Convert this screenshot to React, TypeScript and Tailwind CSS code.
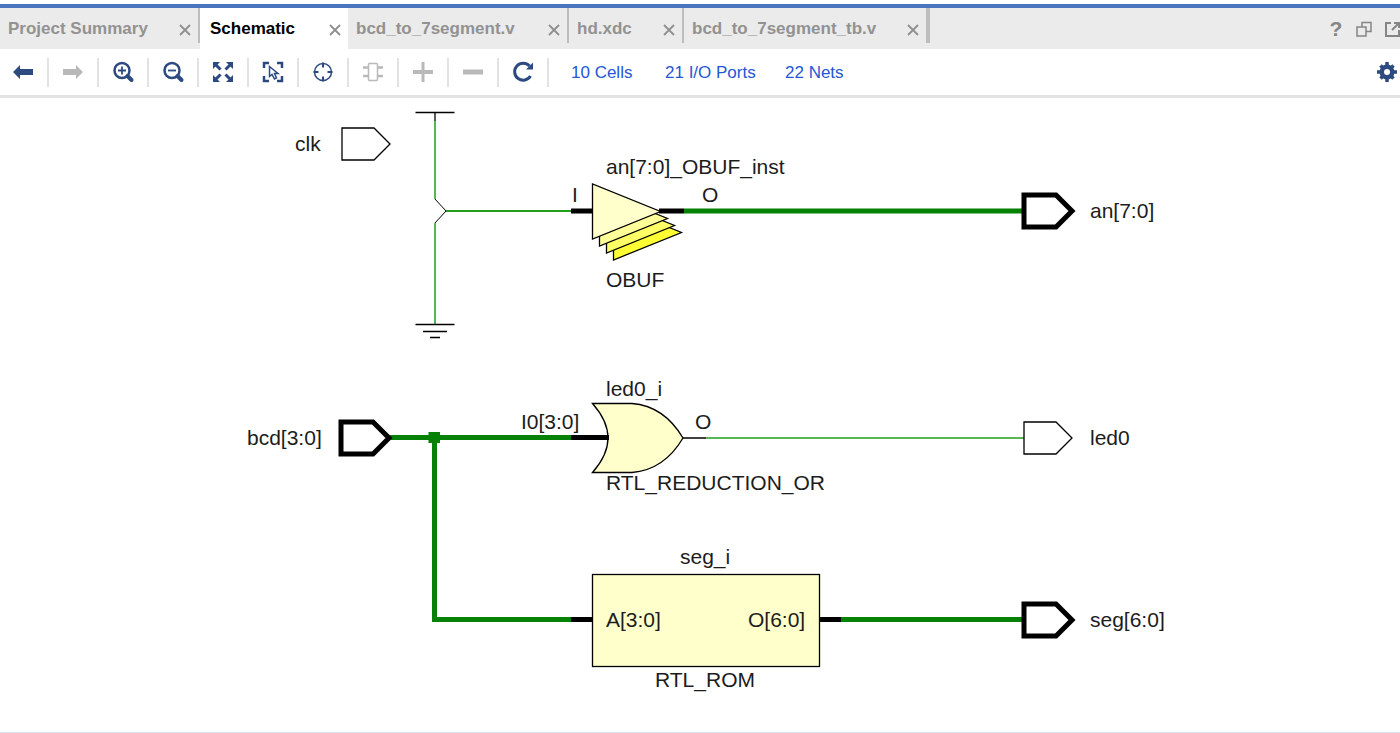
import type { ReactNode } from "react";

type Tab = {
  name: string;
  width: string;
  divider: string;
  active?: boolean;
};

type ToolItem = {
  label: string;
  icon: ReactNode;
  disabled?: boolean;
};

const tabs: Tab[] = [
  { name: "Project Summary", width: "w-[200px]", divider: "w-0.5" },
  { name: "Schematic", width: "w-[148px]", divider: "w-0", active: true },
  { name: "bcd_to_7segment.v", width: "w-[221px]", divider: "w-0.5" },
  { name: "hd.xdc", width: "w-[115px]", divider: "w-0.5" },
  { name: "bcd_to_7segment_tb.v", width: "w-[246px]", divider: "w-1" },
];

// Toolbar icons, all drawn on a 24x24 grid
const tools: ToolItem[] = [
  {
    label: "Previous",
    icon: <path d="M2 12 9 5V9H22V15H9V19Z" fill="currentColor" />,
  },
  {
    label: "Next",
    disabled: true,
    icon: <path d="M22 12 15 5V9H2V15H15V19Z" fill="currentColor" />,
  },
  {
    label: "Zoom in",
    icon: (
      <g fill="none" stroke="currentColor">
        <circle cx="11" cy="10.500" r="7.500" strokeWidth="2.500" />
        <path d="M7 10.500H15M11 6.500V14.500" strokeWidth="1.800" />
        <path d="M16.500 16 20.500 20" strokeWidth="4" strokeLinecap="round" />
      </g>
    ),
  },
  {
    label: "Zoom out",
    icon: (
      <g fill="none" stroke="currentColor">
        <circle cx="11" cy="10.500" r="7.500" strokeWidth="2.500" />
        <path d="M7 10.500H15" strokeWidth="1.800" />
        <path d="M16.500 16 20.500 20" strokeWidth="4" strokeLinecap="round" />
      </g>
    ),
  },
  {
    label: "Zoom fit",
    icon: (
      <g>
        <path
          d="M2 2H9L2 9ZM22 2V9L15 2ZM2 22V15L9 22ZM22 22H15L22 15Z"
          fill="currentColor"
        />
        <path
          d="M4 4 9.500 9.500M20 4 14.500 9.500M4 20 9.500 14.500M20 20 14.500 14.500"
          stroke="currentColor"
          strokeWidth="3"
        />
      </g>
    ),
  },
  {
    label: "Select area",
    icon: (
      <g fill="none" stroke="currentColor">
        <path d="M3 8V3H8M16 3H21V8M21 16V21H16M8 21H3V16" strokeWidth="2.500" />
        <path
          d="M8.500 6.500V16.500L11 14.500L13.500 19L15.500 18L13.500 13.500H17Z"
          strokeWidth="1.500"
        />
      </g>
    ),
  },
  {
    label: "Center selection",
    icon: (
      <g fill="none" stroke="currentColor">
        <circle cx="12" cy="12" r="8.500" strokeWidth="1.500" />
        <path d="M12 2.500V7.500M12 16.500V21.500M2.500 12H7.500M16.500 12H21.500" strokeWidth="2" />
      </g>
    ),
  },
  {
    label: "Expand cell",
    disabled: true,
    icon: (
      <g fill="none" stroke="currentColor">
        <rect x="7.500" y="3.500" width="9" height="17" rx="1" strokeWidth="1.500" />
        <path d="M2 7.500H7M2 16H7M17 7.500H22M17 16H22" strokeWidth="2.500" />
      </g>
    ),
  },
  {
    label: "Add",
    disabled: true,
    icon: <path d="M10.500 2H13.500V10H22V14H13.500V22H10.500V14H2V10H10.500Z" fill="currentColor" />,
  },
  {
    label: "Remove",
    disabled: true,
    icon: <path d="M2 9.500H22V14.500H2Z" fill="currentColor" />,
  },
  {
    label: "Regenerate",
    icon: (
      <g>
        <path
          d="M18.500 6A8.500 8.500 0 1 0 19.500 16"
          fill="none"
          stroke="currentColor"
          strokeWidth="3"
        />
        <path d="M22 2.500V9.500H15Z" fill="currentColor" />
      </g>
    ),
  },
];

const stats = [
  { text: "10 Cells", width: "w-[94px]" },
  { text: "21 I/O Ports", width: "w-[120px]" },
  { text: "22 Nets", width: "w-[70px]" },
];

const labels = [
  { x: 295, y: 151, text: "clk" },
  { x: 606, y: 174, text: "an[7:0]_OBUF_inst" },
  { x: 572, y: 202, text: "I" },
  { x: 702, y: 202, text: "O" },
  { x: 606, y: 287, text: "OBUF" },
  { x: 1090, y: 218, text: "an[7:0]" },
  { x: 606, y: 396, text: "led0_i" },
  { x: 521, y: 429, text: "I0[3:0]" },
  { x: 695, y: 429, text: "O" },
  { x: 606, y: 490, text: "RTL_REDUCTION_OR" },
  { x: 1090, y: 445, text: "led0" },
  { x: 247, y: 445, text: "bcd[3:0]" },
  { x: 680, y: 564, text: "seg_i" },
  { x: 606, y: 627, text: "A[3:0]" },
  { x: 748, y: 627, text: "O[6:0]" },
  { x: 655, y: 687, text: "RTL_ROM" },
  { x: 1090, y: 627, text: "seg[6:0]" },
];

// Stacked buffers, back to front
const buffers = [
  { shift: 21, fill: "#ffff33" },
  { shift: 14, fill: "#ffff66" },
  { shift: 7, fill: "#ffff99" },
  { shift: 0, fill: "#ffffcc" },
];

function Port({ x, y, bus }: { x: number; y: number; bus?: boolean }) {
  return (
    <path
      d={`M${x} ${y - 16}H${x + 32}L${x + 48} ${y}L${x + 32} ${y + 16}H${x}Z`}
      fill="#fff"
      stroke="#000"
      strokeWidth={bus ? 5 : 1.3}
    />
  );
}

function Schematic() {
  return (
    <svg
      viewBox="0 98 1400 634"
      className="block h-auto w-full"
      role="img"
      aria-label="Schematic"
      fontFamily="'Liberation Sans', Arial, sans-serif"
      fontSize="21"
    >
      {/* nets */}
      <g fill="none" stroke="#22a01c" strokeWidth="1.5">
        <path d="M435 121V199M435 223V324" />
        <path d="M446 211H571" strokeWidth="2" />
        <path d="M706 438H1024" />
      </g>
      <g fill="none" stroke="#058205" strokeWidth="5">
        <path d="M684 211H1022" />
        <path d="M388 437.500H571" />
        <path d="M434.500 437.500V619.500H571" />
        <path d="M841 619.500H1022" />
      </g>
      <rect x="428.500" y="432" width="11.500" height="11" fill="#058205" />

      {/* power and ground */}
      <g fill="none" stroke="#000" strokeWidth="1.3">
        <path d="M415.500 112.500H454.500M435 112.500V121" />
        <path d="M435 199L446 211L435 223" strokeWidth="1" />
        <path d="M415.500 324.500H454.500M423 331.500H447M430 337.500H440" />
      </g>

      {/* cells */}
      {buffers.map(({ shift, fill }) => (
        <path
          key={shift}
          d="M592.500 184V239L660.500 211.500Z"
          transform={`translate(${shift} ${shift})`}
          fill={fill}
          stroke="#000"
          strokeWidth="1.3"
        />
      ))}
      <path
        d="M592.500 403.500H632Q664 406 683 438Q664 470 632 472.500H592.500Q608 455 608 438Q608 421 592.500 403.500Z"
        fill="#ffffcc"
        stroke="#000"
        strokeWidth="1.3"
      />
      <rect
        x="592.500"
        y="574.500"
        width="227"
        height="92"
        fill="#ffffcc"
        stroke="#000"
        strokeWidth="1.3"
      />

      {/* pins */}
      <g fill="none" stroke="#000" strokeWidth="5">
        <path d="M571 211H592M659 211H684" />
        <path d="M571 437.500H609" />
        <path d="M571 619.500H592M820 619.500H841" />
        <path d="M683 438H706" strokeWidth="1.500" />
      </g>

      <Port x={342} y={144} />
      <Port x={341} y={438} bus />
      <Port x={1024} y={211} bus />
      <Port x={1024} y={438} />
      <Port x={1024} y={620} bus />

      <g fill="#1c1c1c">
        {labels.map((l) => (
          <text key={`${l.x}-${l.y}`} x={l.x} y={l.y}>
            {l.text}
          </text>
        ))}
      </g>
    </svg>
  );
}

export default function App() {
  return (
    <div className="flex min-h-screen flex-col overflow-hidden bg-white pt-1 font-['Liberation_Sans',Arial,sans-serif]">
      <header className="flex h-[45px] justify-between border-t-4 border-[#4a76c0] bg-[#ebebeb]">
        <nav className="flex" aria-label="Documents">
          {tabs.map((tab) => (
            <div
              key={tab.name}
              className={`flex justify-between ${tab.width} ${tab.active ? "bg-white" : ""}`}
            >
              <button
                className={`pt-px text-[17px] leading-5 font-bold whitespace-nowrap ${
                  tab.active ? "pl-[10px] text-black" : "pl-2 text-[#929292]"
                }`}
              >
                {tab.name}
              </button>
              <div className="flex gap-[7px]">
                <button aria-label={`Close ${tab.name}`} className="pt-0.5 text-[#8f8f8f]">
                  <svg viewBox="0 0 12 12" className="size-3">
                    <path d="M1 1 11 11M11 1 1 11" stroke="currentColor" strokeWidth="1.800" />
                  </svg>
                </button>
                <span className={`h-[35px] bg-[#bdbdbd] ${tab.divider}`} />
              </div>
            </div>
          ))}
        </nav>
        <div className="-mr-0.5 flex items-center gap-3 text-[#858585]">
          <button aria-label="Help" className="w-4 text-[21px] leading-6 font-bold">
            ?
          </button>
          <button aria-label="Restore">
            <svg viewBox="0 0 16 16" className="size-4" fill="none" stroke="currentColor" strokeWidth="1.500">
              <path d="M1 6H10V15H1Z" />
              <path d="M6 6V1.500H15V10.500H10" />
            </svg>
          </button>
          <button aria-label="Float">
            <svg viewBox="0 0 18 16" className="h-4 w-[18px]" fill="none" stroke="currentColor" strokeWidth="2">
              <path d="M7 2H2V15H15V9" />
              <path d="M8 9 14 3M10 2H15V7" />
            </svg>
          </button>
        </div>
      </header>

      <div className="flex h-[49px] items-center border-b-3 border-[#e4e4e4]">
        <div className="-ml-px flex">
          {tools.map((tool) => (
            <button
              key={tool.label}
              aria-label={tool.label}
              disabled={tool.disabled}
              className={`flex h-[29px] w-[50px] items-center justify-center border-r-2 border-[#e2e2e2] ${
                tool.disabled ? "text-[#b9b9b9]" : "text-[#2c4a80]"
              }`}
            >
              <svg viewBox="0 0 24 24" className="size-6">
                {tool.icon}
              </svg>
            </button>
          ))}
        </div>
        <div className="flex pt-px pl-[22px] text-[17px] leading-5 text-[#2456d6]">
          {stats.map((s) => (
            <a key={s.text} href="#" className={`whitespace-nowrap ${s.width}`}>
              {s.text}
            </a>
          ))}
        </div>
        <button aria-label="Settings" className="mr-[2px] ml-auto text-[#2c4a80]">
          <svg viewBox="0 0 22 22" className="size-[22px]">
            <g stroke="currentColor" strokeWidth="3.500">
              <path d="M11 1V21M1 11H21M4.500 4.500 17.500 17.500M17.500 4.500 4.500 17.500" />
            </g>
            <circle cx="11" cy="11" r="7.500" fill="currentColor" />
            <circle cx="11" cy="11" r="3" fill="#fff" />
          </svg>
        </button>
      </div>

      <main className="flex-1 border-b border-[#d5e3f3]">
        <Schematic />
      </main>
    </div>
  );
}
